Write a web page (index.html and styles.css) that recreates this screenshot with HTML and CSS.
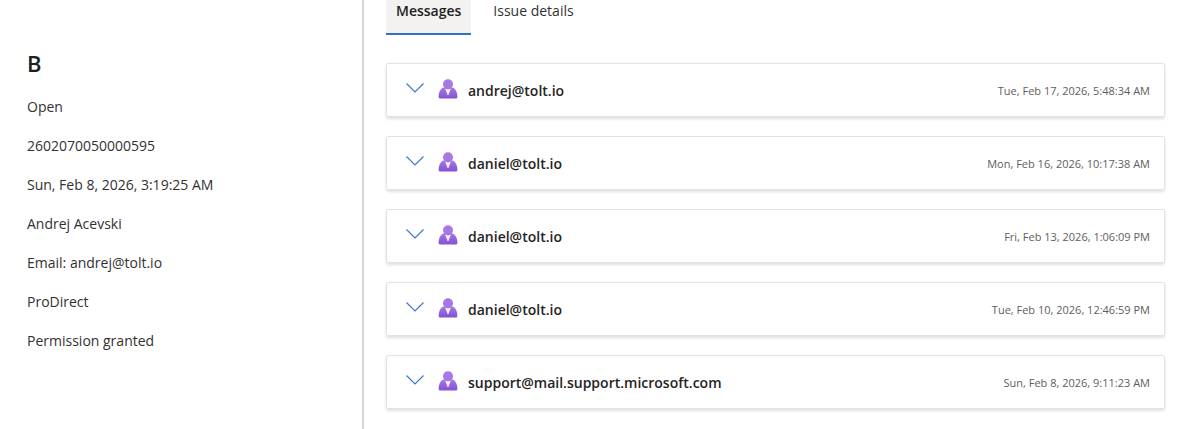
FILE: index.html
```html
<!DOCTYPE html>
<html lang="en">
<head>
  <meta charset="UTF-8">
  <meta name="viewport" content="width=device-width, initial-scale=1.0">
  <title>Support request</title>
  <link rel="stylesheet" href="styles.css">
</head>
<body>

<!-- Shared icons -->
<svg class="sprite" width="0" height="0" aria-hidden="true">
  <defs>
    <linearGradient id="purple" x1="0" y1="0" x2="0" y2="1">
      <stop offset="0" stop-color="#a877e6"/>
      <stop offset="1" stop-color="#8250d2"/>
    </linearGradient>
    <symbol id="icon-chevron" viewBox="0 0 18 10">
      <path d="M0.5 0.5 L9 9 L17.5 0.5" fill="none" stroke="#3c78d0" stroke-width="1.2"/>
    </symbol>
    <symbol id="icon-user" viewBox="0 0 20 20">
      <path d="M0.6 18 C0.6 13.5 2.6 9 6 8.6 H14 C17.4 9 19.4 13.5 19.4 18 Q19.4 19.6 17.8 19.6 H2.2 Q0.6 19.6 0.6 18 Z" fill="url(#purple)"/>
      <path d="M7.2 9.4 L10 10.4 L12.8 9.4 L10.5 15.8 H9.5 Z" fill="#fff"/>
      <path d="M9.4 10.6 H10.6 L10.3 12 L10.6 15.4 L10 16.2 L9.4 15.4 L9.7 12 Z" fill="#e3d3f8"/>
      <circle cx="10" cy="5.2" r="5" fill="#a877e6"/>
    </symbol>
  </defs>
</svg>

<div class="page">
  <aside class="summary">
    <h2>B</h2>
    <ul>
      <li>Open</li>
      <li>2602070050000595</li>
      <li>Sun, Feb 8, 2026, 3:19:25 AM</li>
      <li>Andrej Acevski</li>
      <li>Email: andrej@tolt.io</li>
      <li>ProDirect</li>
      <li>Permission granted</li>
    </ul>
  </aside>

  <main class="content">
    <div class="tabs" role="tablist">
      <button class="tab active" role="tab" aria-selected="true">Messages</button>
      <button class="tab" role="tab" aria-selected="false">Issue details</button>
    </div>

    <div class="messages">
      <article class="message">
        <button class="toggle" aria-label="Expand message"><svg width="18" height="10"><use href="#icon-chevron"/></svg></button>
        <svg class="avatar" width="20" height="20"><use href="#icon-user"/></svg>
        <span class="sender">andrej@tolt.io</span>
        <time>Tue, Feb 17, 2026, 5:48:34 AM</time>
      </article>
      <article class="message">
        <button class="toggle" aria-label="Expand message"><svg width="18" height="10"><use href="#icon-chevron"/></svg></button>
        <svg class="avatar" width="20" height="20"><use href="#icon-user"/></svg>
        <span class="sender">daniel@tolt.io</span>
        <time>Mon, Feb 16, 2026, 10:17:38 AM</time>
      </article>
      <article class="message">
        <button class="toggle" aria-label="Expand message"><svg width="18" height="10"><use href="#icon-chevron"/></svg></button>
        <svg class="avatar" width="20" height="20"><use href="#icon-user"/></svg>
        <span class="sender">daniel@tolt.io</span>
        <time>Fri, Feb 13, 2026, 1:06:09 PM</time>
      </article>
      <article class="message">
        <button class="toggle" aria-label="Expand message"><svg width="18" height="10"><use href="#icon-chevron"/></svg></button>
        <svg class="avatar" width="20" height="20"><use href="#icon-user"/></svg>
        <span class="sender">daniel@tolt.io</span>
        <time>Tue, Feb 10, 2026, 12:46:59 PM</time>
      </article>
      <article class="message">
        <button class="toggle" aria-label="Expand message"><svg width="18" height="10"><use href="#icon-chevron"/></svg></button>
        <svg class="avatar" width="20" height="20"><use href="#icon-user"/></svg>
        <span class="sender">support@mail.support.microsoft.com</span>
        <time>Sun, Feb 8, 2026, 9:11:23 AM</time>
      </article>
    </div>
  </main>
</div>

</body>
</html>
```
FILE: styles.css
```css
* {
  box-sizing: border-box;
}

body {
  margin: 0;
  font-family: 'Segoe UI', 'Open Sans', 'Noto Sans', sans-serif;
  font-size: 14px;
  line-height: 20px;
  color: #323130;
  background: #fff;
}

button {
  font: inherit;
  color: inherit;
  border: none;
  background: none;
  cursor: pointer;
}

.sprite {
  position: absolute;
}

.page {
  display: flex;
  min-height: 100vh;
}

.summary {
  flex: 0 0 364px;
  padding: 47px 27px 0;
  border-right: 2px solid #d6d6d6;
}

.summary h2 {
  margin: 0 0 18px;
  font-size: 22px;
  line-height: 32px;
  font-weight: 600;
  color: #201f1e;
}

.summary ul {
  display: flex;
  flex-direction: column;
  gap: 19px;
  margin: 0;
  padding: 0;
  list-style: none;
}

.content {
  flex: 1;
  min-width: 0;
  padding: 0 35px 20px 22px;
}

.tabs {
  display: flex;
  gap: 12px;
}

.tab {
  padding: 1px 10px 12px;
  border-bottom: 2px solid transparent;
}

.tab.active {
  font-weight: 600;
  color: #201f1e;
  background: #f3f2f1;
  border-bottom-color: #2f6fcb;
}

.messages {
  display: flex;
  flex-direction: column;
  gap: 19px;
  margin-top: 28px;
}

.message {
  display: flex;
  align-items: center;
  padding: 15px 14px 13px 19px;
  border: 1px solid #e3e3e3;
  border-radius: 2px;
  box-shadow: 0 2px 3px rgba(0, 0, 0, 0.12);
}

.toggle {
  display: flex;
  margin-right: 14px;
  padding: 0 0 6px;
}

.avatar {
  margin: 0 10px 4px 0;
}

.sender {
  flex: 1;
  font-weight: 600;
  color: #252423;
}

time {
  font-size: 11px;
  color: #605e5c;
}
```
